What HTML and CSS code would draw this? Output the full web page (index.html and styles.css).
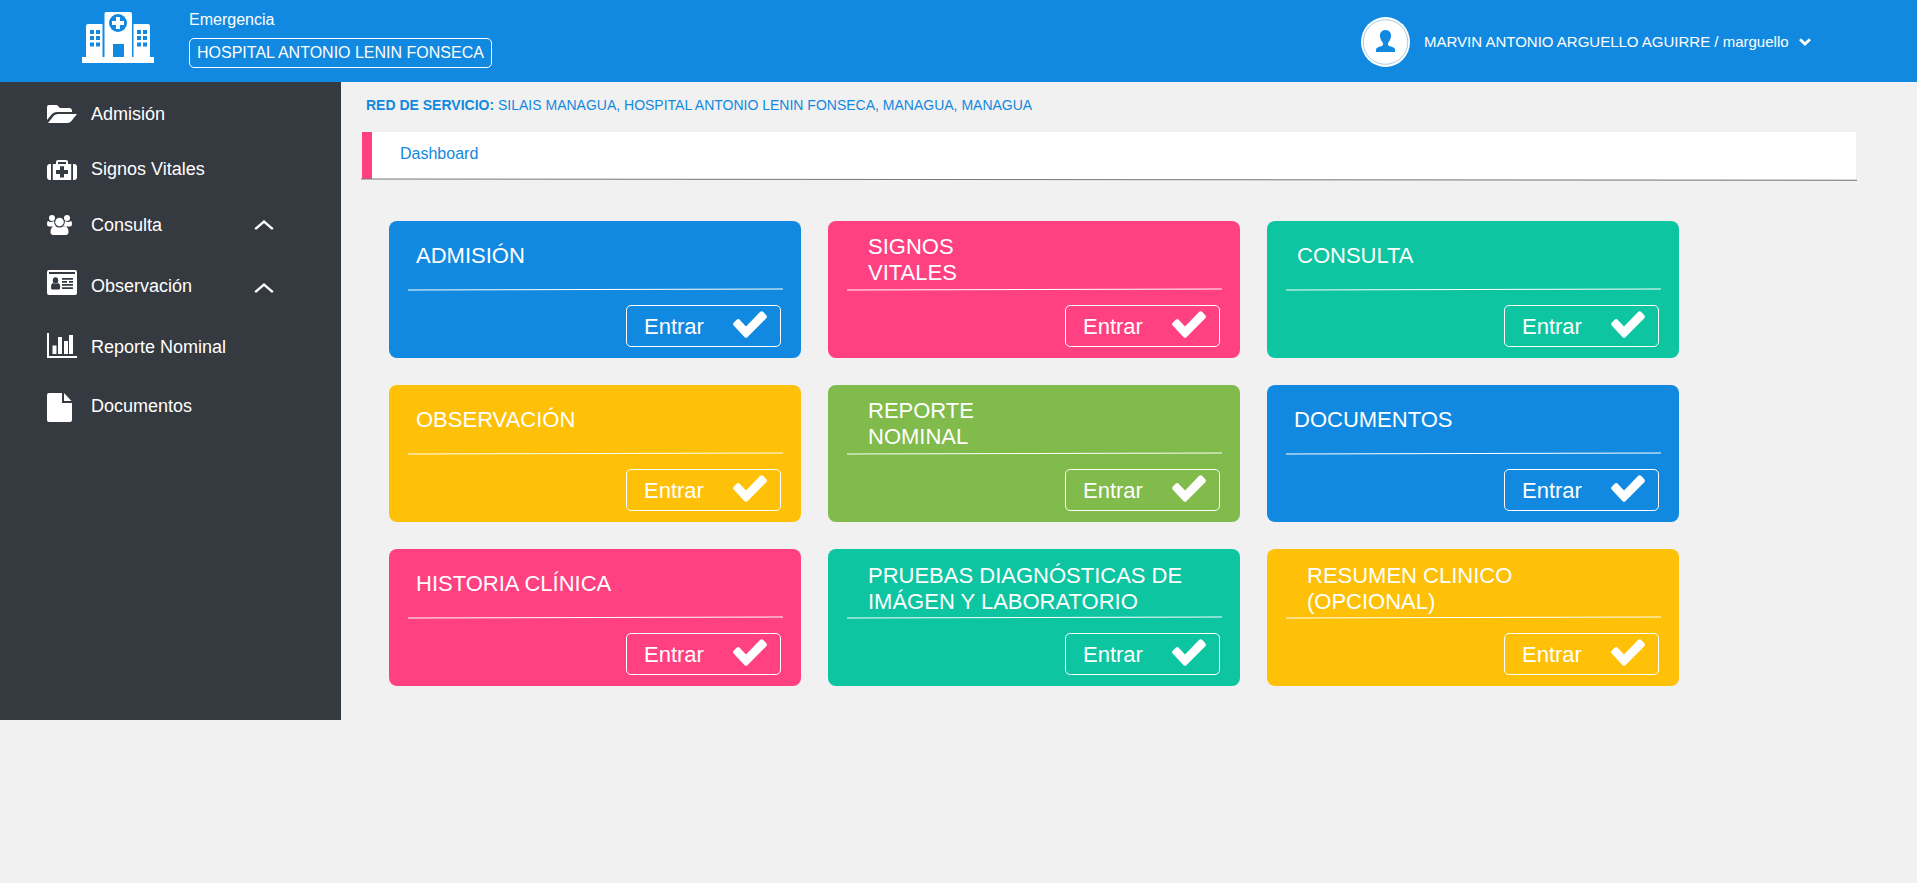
FILE: index.html
```html
<!DOCTYPE html>
<html lang="es">
<head>
<meta charset="utf-8">
<title>Dashboard</title>
<link rel="stylesheet" href="styles.css">
</head>
<body>
<svg class="defs" aria-hidden="true">
  <symbol id="check" viewBox="0 0 34 27"><path d="M5.500 8Q4.500 8 3.600 8.800L.700 11.800Q-.500 13.200.700 14.600L11.600 26.200Q13 27.500 14.400 26.200L33.300 7.300Q34.500 5.800 33.300 4.300L30.300 .900Q28.700-.500 27 1L13 15.600L6.900 8.900Q6.300 8 5.500 8Z"/></symbol>
  <symbol id="rule" viewBox="0 0 375 3"><path d="M0 2L375 1"/></symbol>
  <symbol id="up" viewBox="0 0 20 11"><path d="M1.200 9.200L10 1.600L18.800 9.200"/></symbol>
</svg>
<header class="header">
  <svg class="logo" viewBox="0 0 72 51"><path fill-rule="evenodd" d="M24 0H48Q50 0 50 2V45H51.500V12H66Q68 12 68 14V45H72V51H0V45H4V14Q4 12 6 12H20.500V45H22.500V2Q22.500 0 24 0ZM31 32V45H42V32ZM8 18V22H12V18ZM14 18V22H18V18ZM8 24V28H12V24ZM14 24V28H18V24ZM8 30.500V34.500H12V30.500ZM14 30.500V34.500H18V30.500ZM55 18V22H59V18ZM61 18V22H65V18ZM55 24V28H59V24ZM61 24V28H65V24ZM55 30.500V34.500H59V30.500ZM61 30.500V34.500H65V30.500Z"/><circle class="blue" cx="36" cy="11" r="9"/><path d="M34 5H38V9H42V13H38V17H34V13H30V9H34Z"/></svg>
  <div class="place"><div class="area">Emergencia</div><div class="hospital">HOSPITAL ANTONIO LENIN FONSECA</div></div>
  <div class="user">
    <svg class="avatar" viewBox="0 0 49 50"><ellipse cx="24.500" cy="25" rx="24.500" ry="25"/><circle class="ring" cx="24.500" cy="25" r="22.300"/><path class="blue" d="M24.500 13C28.500 13 30.500 16 30 19.500C29.600 22.500 28.300 24.600 27 26V28C29 30 34 29.500 34 33V35H15V33C15 29.500 20 30 22 28V26C20.700 24.600 19.400 22.500 19 19.500C18.500 16 20.500 13 24.500 13Z"/></svg>
    <span class="username">MARVIN ANTONIO ARGUELLO AGUIRRE / marguello</span>
    <svg class="down" viewBox="0 0 12 8"><path d="M1 1.300L6 6L11 1.300"/></svg>
  </div>
</header>
<div class="shell">
<nav class="sidebar">
  <a class="item i1"><svg width="30" height="18" viewBox="0 0 30 18"><path d="M0 2Q0 0 2 0H10L13 3H22Q25 3 25 6V7H10Q7 7 5 9L0 15ZM1 18L7 10.500Q8.500 9 11 9H30L24 16.500Q22.500 18 20 18Z"/></svg><span>Admisión</span></a>
  <a class="item i2"><svg width="30" height="20" viewBox="0 0 30 20"><path fill-rule="evenodd" d="M4 4V20H3Q0 20 0 17V7Q0 4 3 4ZM26 4H27Q30 4 30 7V17Q30 20 27 20H26ZM5.800 4H9V2Q9 0 11 0H19Q21 0 21 2V4H24.200V20H5.800ZM11 2V4H19V2ZM13 6.300V10H9V14H13V17.500H17V14H21V10H17V6.300Z"/></svg><span>Signos Vitales</span></a>
  <a class="item i3"><svg width="25" height="20" viewBox="0 0 25 20"><circle cx="5" cy="3" r="3"/><circle cx="20" cy="3" r="3"/><circle cx="12.500" cy="7" r="4.300"/><path d="M1 6Q4 8 7 6Q7 9 9 11.500H2Q0 11.500 0 9Q0 6 1 6ZM24 6Q21 8 18 6Q18 9 16 11.500H23Q25 11.500 25 9Q25 6 24 6ZM8 11Q12.500 14 17 11Q21.500 11.500 21.500 17Q21.500 20 18.500 20H6.500Q3.500 20 3.500 17Q3.500 11.500 8 11Z"/></svg><span>Consulta</span><svg class="up"><use href="#up"/></svg></a>
  <a class="item i4"><svg width="30" height="25" viewBox="0 0 30 25"><path fill-rule="evenodd" d="M2 0H28Q30 0 30 2V23Q30 25 28 25H2Q0 25 0 23V2Q0 0 2 0ZM2 2V4H28V2Z"/><g class="dark"><ellipse cx="8.500" cy="10.500" rx="2.700" ry="3.300"/><path d="M6 13Q8.500 15 11 13Q13.200 13.500 13.200 17Q13.200 19.500 12 19.500H5Q4 19.500 4 17Q4 13.500 6 13ZM15 8H26V9.700H15ZM15 11H20V12.700H15ZM22 11H26V12.700H22ZM15 14H26V15.700H15ZM15 17.300H26V19H15Z"/></g></svg><span>Observación</span><svg class="up"><use href="#up"/></svg></a>
  <a class="item i5"><svg width="30" height="25" viewBox="0 0 30 25"><path d="M0 0H2V23H30V25H0ZM5.500 12.500H9.500V21H5.500ZM11 4H15V21H11ZM17 8H21V21H17ZM22 2H26V21H22Z"/></svg><span>Reporte Nominal</span></a>
  <a class="item i6"><svg width="25" height="29" viewBox="0 0 25 29"><path d="M2 0H15V10H25V27Q25 29 23 29H2Q0 29 0 27V2Q0 0 2 0ZM17 0L24.500 8H17Z"/></svg><span>Documentos</span></a>
</nav>
<main class="main">
  <div class="network"><b>RED DE SERVICIO:</b> SILAIS MANAGUA, HOSPITAL ANTONIO LENIN FONSECA, MANAGUA, MANAGUA</div>
  <div class="crumb"><span>Dashboard</span></div>
  <svg class="crumb-line" viewBox="0 0 1496 3" preserveAspectRatio="none"><path d="M0 1L1496 2.300"/></svg>
  <div class="cards">
    <section class="card c-blue"><h2>ADMISIÓN</h2><svg class="rule"><use href="#rule"/></svg><a class="enter"><span>Entrar</span><svg class="check"><use href="#check"/></svg></a></section>
    <section class="card c-pink two"><h2>SIGNOS<br>VITALES</h2><svg class="rule"><use href="#rule"/></svg><a class="enter"><span>Entrar</span><svg class="check"><use href="#check"/></svg></a></section>
    <section class="card c-teal consulta"><h2>CONSULTA</h2><svg class="rule"><use href="#rule"/></svg><a class="enter"><span>Entrar</span><svg class="check"><use href="#check"/></svg></a></section>
    <section class="card c-gold"><h2>OBSERVACIÓN</h2><svg class="rule"><use href="#rule"/></svg><a class="enter"><span>Entrar</span><svg class="check"><use href="#check"/></svg></a></section>
    <section class="card c-green two"><h2>REPORTE<br>NOMINAL</h2><svg class="rule"><use href="#rule"/></svg><a class="enter"><span>Entrar</span><svg class="check"><use href="#check"/></svg></a></section>
    <section class="card c-blue"><h2>DOCUMENTOS</h2><svg class="rule"><use href="#rule"/></svg><a class="enter"><span>Entrar</span><svg class="check"><use href="#check"/></svg></a></section>
    <section class="card c-pink"><h2>HISTORIA CLÍNICA</h2><svg class="rule"><use href="#rule"/></svg><a class="enter"><span>Entrar</span><svg class="check"><use href="#check"/></svg></a></section>
    <section class="card c-teal two low"><h2>PRUEBAS DIAGNÓSTICAS DE<br>IMÁGEN Y LABORATORIO</h2><svg class="rule"><use href="#rule"/></svg><a class="enter"><span>Entrar</span><svg class="check"><use href="#check"/></svg></a></section>
    <section class="card c-gold two low"><h2>RESUMEN CLINICO<br>(OPCIONAL)</h2><svg class="rule"><use href="#rule"/></svg><a class="enter"><span>Entrar</span><svg class="check"><use href="#check"/></svg></a></section>
  </div>
</main>
</div>
</body>
</html>
```
FILE: styles.css
```css
* { box-sizing: border-box; }
body { margin: 0; height: 883px; overflow: hidden; background: #f1f1f1; font-family: "Liberation Sans", Arial, sans-serif; }
svg { display: block; flex: none; fill: #fff; }
.defs { display: none; }
.header { height: 82px; display: flex; background: #1289e0; color: #fff; padding-left: 82px; }
.logo { width: 72px; height: 51px; margin-top: 12px; }
.blue { fill: #1289e0; }
.place { margin-left: 35px; padding-top: 11px; font-size: 16px; line-height: 18px; white-space: nowrap; }
.hospital { width: 303px; height: 30px; margin-top: 9px; padding: 5px 0 0 7px; border: 1px solid #fff; border-radius: 5px; }
.user { display: flex; margin-left: auto; width: 556px; padding-top: 17px; }
.avatar { width: 49px; height: 50px; }
.ring { fill: none; stroke: #a9cbe3; stroke-width: 1; }
.username { width: 366px; margin: 16px 0 0 14px; font-size: 15px; line-height: 18px; white-space: nowrap; }
.down { width: 12px; height: 8px; margin: 21px 0 0 9px; }
.down path { fill: none; stroke: #fff; stroke-width: 2.8; }
.shell { display: flex; align-items: flex-start; }
.sidebar { width: 341px; height: 638px; background: #353940; color: #fff; font-size: 18px; padding: 22px 0 0 47px; }
.item { display: flex; align-items: flex-start; line-height: 20px; }
.item span { width: 163px; margin-left: 14px; }
.item .up { width: 20px; height: 11px; margin-top: 5px; }
.i1 { height: 55px; }
.i1 > svg:first-child { margin-top: 1px; }
.i2 { height: 56px; }
.i2 > svg:first-child { margin-top: 1px; }
.i3 { height: 55px; }
.i3 span, .i6 span { margin-left: 19px; }
.i4 { height: 63px; }
.i4 span { margin-top: 6px; }
.i4 .up { margin-top: 13px; }
.i5 { height: 60px; }
.i5 span { margin-top: 4px; }
.i6 span { margin-top: 3px; }
#up path { fill: none; stroke: #fff; stroke-width: 2.4; }
.dark { fill: #353940; }
.main { padding-left: 21px; }
.network { height: 50px; padding: 15px 0 0 4px; color: #1289e0; font-size: 14px; line-height: 16px; white-space: nowrap; }
.crumb { width: 1494px; height: 47px; background: #fff; border-left: 10px solid #ff4081; padding: 13px 0 0 28px; font-size: 16px; line-height: 18px; color: #1289e0; }
.crumb-line { width: 1496px; height: 3px; margin: -1px 0 0 -1px; }
.crumb-line path { stroke: #777; stroke-width: 1; }
.cards { display: grid; grid-template-columns: repeat(3, 412px); grid-auto-rows: 137px; gap: 27px; margin: 40px 0 0 27px; }
.card { border-radius: 8px; color: #fff; padding: 0 19px; display: flex; flex-direction: column; }
.c-blue { background: #1289e0; }
.c-pink { background: #ff4081; }
.c-teal { background: #0dc5a1; }
.c-gold { background: #ffc107; }
.c-green { background: #80bb4b; }
.card h2 { flex: none; height: 67px; margin: 0; padding: 22px 0 0 8px; font-size: 22px; font-weight: 400; line-height: 26px; white-space: nowrap; }
.card.consulta h2 { padding-left: 11px; }
.card.two h2 { padding: 13px 0 0 21px; }
.card.low h2 { padding-top: 14px; }
.rule { width: 375px; height: 3px; }
#rule path { stroke: #fff; stroke-width: 1; }
.enter { display: flex; width: 155px; height: 42px; margin: 14px 0 0 218px; border: 1px solid #fff; border-radius: 5px; padding: 8px 0 0 17px; font-size: 22px; line-height: 25px; }
.enter span { width: 89px; }
.check { width: 34px; height: 27px; margin-top: -3px; }
```
